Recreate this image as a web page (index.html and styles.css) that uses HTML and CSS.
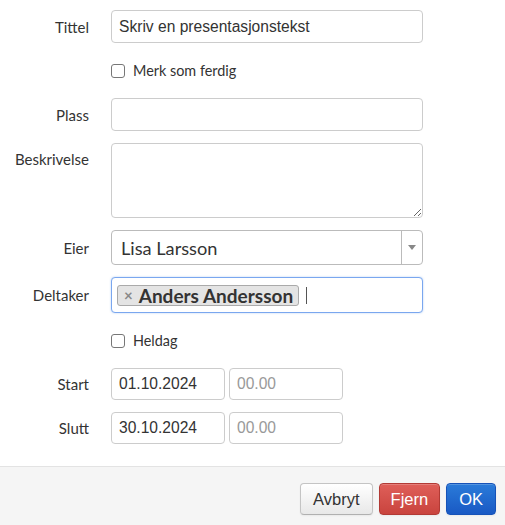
FILE: index.html
```html
<!DOCTYPE html>
<html lang="no">
<head>
<meta charset="utf-8">
<title>Oppgave</title>
<link rel="stylesheet" href="styles.css">
</head>
<body>
<div class="dialog">
  <form class="form">
    <div class="row">
      <label class="label">Tittel</label>
      <input class="input" type="text" value="Skriv en presentasjonstekst">
    </div>
    <div class="row row-check">
      <span></span>
      <label class="check"><span class="box"></span>Merk som ferdig</label>
    </div>
    <div class="row">
      <label class="label">Plass</label>
      <input class="input" type="text">
    </div>
    <div class="row row-top">
      <label class="label label-top">Beskrivelse</label>
      <textarea class="textarea"></textarea>
    </div>
    <div class="row">
      <label class="label">Eier</label>
      <div class="select">
        <span class="select-value">Lisa Larsson</span>
        <span class="select-arrow"><svg width="8" height="5" viewBox="0 0 8 5"><path d="M0 0h8L4 5z" fill="#888"/></svg></span>
      </div>
    </div>
    <div class="row">
      <label class="label">Deltaker</label>
      <div class="tags">
        <span class="chip"><span class="chip-x">×</span>Anders Andersson</span>
        <span class="caret"></span>
      </div>
    </div>
    <div class="row row-check">
      <span></span>
      <label class="check"><span class="box"></span>Heldag</label>
    </div>
    <div class="row">
      <label class="label">Start</label>
      <div class="pair">
        <input class="input input-half" type="text" value="01.10.2024">
        <input class="input input-half" type="text" placeholder="00.00">
      </div>
    </div>
    <div class="row">
      <label class="label">Slutt</label>
      <div class="pair">
        <input class="input input-half" type="text" value="30.10.2024">
        <input class="input input-half" type="text" placeholder="00.00">
      </div>
    </div>
  </form>
  <div class="footer">
    <button class="btn" type="button">Avbryt</button>
    <button class="btn btn-danger" type="button">Fjern</button>
    <button class="btn btn-primary" type="button">OK</button>
  </div>
</div>
</body>
</html>
```

FILE: styles.css
```css
html, body {
  margin: 0;
  padding: 0;
  background: #fff;
}

.dialog {
  width: 505px;
  height: 525px;
  display: flex;
  flex-direction: column;
  font-family: Lato, "Noto Sans", sans-serif;
  color: #333;
}

.form {
  display: flex;
  flex-direction: column;
  gap: 12px;
  padding: 10px 0 22px;
}

.row {
  display: grid;
  grid-template-columns: 89px 312px;
  column-gap: 22px;
  align-items: center;
}

.row-top {
  align-items: start;
}

.row-check {
  height: 31px;
}

.label {
  text-align: right;
  font-size: 15px;
  line-height: 20px;
  color: #333;
}

.label-top {
  padding-top: 6px;
}

.input,
.textarea {
  box-sizing: border-box;
  width: 312px;
  height: 33px;
  margin: 0;
  padding: 4px 7px;
  border: 1px solid #ccc;
  border-radius: 4px;
  font-family: "Liberation Sans", Arial, sans-serif;
  font-size: 15.6px;
  color: #333;
  background: #fff;
  outline: none;
}

.input::placeholder {
  color: #999;
}

.textarea {
  height: 75px;
  resize: vertical;
  display: block;
}

.check {
  display: flex;
  align-items: center;
  gap: 8px;
  font-size: 14.4px;
  color: #333;
}

.box {
  box-sizing: border-box;
  width: 14px;
  height: 14px;
  border: 1px solid #777;
  border-radius: 3px;
  background: #fff;
}

.select {
  box-sizing: border-box;
  width: 312px;
  height: 35px;
  display: flex;
  align-items: center;
  border: 1px solid #bbb;
  border-radius: 4px;
  background: #fff;
}

.select-value {
  flex: 1;
  padding-left: 9px;
  font-size: 18.2px;
  color: #333;
}

.select-arrow {
  width: 20px;
  align-self: stretch;
  display: flex;
  align-items: center;
  justify-content: center;
  border-left: 1px solid #bbb;
}

.tags {
  box-sizing: border-box;
  width: 312px;
  height: 36px;
  display: flex;
  align-items: center;
  gap: 6px;
  padding: 0 5px;
  border: 1px solid #7aa7ef;
  border-radius: 4px;
  box-shadow: 0 0 2px rgba(102, 155, 235, 0.5);
  background: #fff;
}

.chip {
  box-sizing: border-box;
  height: 21px;
  display: flex;
  align-items: center;
  padding: 0 5px 0 6px;
  border: 1px solid #aaa;
  border-radius: 3px;
  background: #e4e4e4;
  font-size: 19px;
  font-weight: 700;
  color: #333;
}

.chip-x {
  font-size: 15px;
  color: #888;
  margin-right: 6px;
}

.caret {
  width: 1px;
  height: 17px;
  background: #555;
  margin-left: 1px;
}

.pair {
  display: flex;
  gap: 4px;
}

.input-half {
  width: 114px;
  height: 32px;
}

.footer {
  flex: 1;
  display: flex;
  justify-content: flex-end;
  align-items: flex-start;
  gap: 6px;
  padding: 16px 9px 0 0;
  border-top: 1px solid #e3e3e3;
  background: #f5f5f5;
}

.btn {
  box-sizing: border-box;
  height: 32px;
  padding: 0 12px;
  border: 1px solid #c4c4c4;
  border-bottom-color: #b0b0b0;
  border-radius: 4px;
  background: linear-gradient(#fff, #e8e8e8);
  font-family: "Liberation Sans", Arial, sans-serif;
  font-size: 16.5px;
  color: #333;
  box-shadow: inset 0 1px 0 rgba(255, 255, 255, 0.2), 0 1px 2px rgba(0, 0, 0, 0.05);
}

.btn-danger {
  padding: 0 11px;
  border-color: #b23a35;
  background: linear-gradient(#df5f59, #c9443e);
  color: #fff;
}

.btn-primary {
  padding: 0 12px;
  border-color: #1652b8;
  background: linear-gradient(#2a7bd9, #1959c4);
  color: #fff;
}
```
